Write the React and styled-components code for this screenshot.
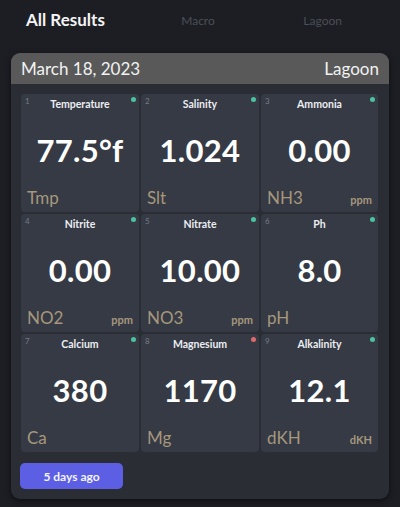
import React from 'react';
import styled, {createGlobalStyle} from 'styled-components';

const GlobalStyle = createGlobalStyle`
  html, body {
    margin: 0;
    padding: 0;
    background: #1c1e24;
  }
  body {
    font-family: Lato, "Open Sans", sans-serif;
    width: 400px;
    height: 507px;
    overflow: hidden;
  }
`;

const Page = styled.div`
  width: 400px;
  height: 507px;
  background: #1c1e24;
  box-sizing: border-box;
  padding: 0 11px;
`;

const Tabs = styled.div`
  display: flex;
  align-items: center;
  height: 38px;
  padding-left: 15px;
`;

const Tab = styled.div`
  color: ${({active}) => (active ? '#f4f4f6' : '#4b4e56')};
  font-size: ${({active}) => (active ? '17px' : '12px')};
  font-weight: ${({active}) => (active ? 700 : 400)};
  width: ${({w}) => w}px;
  text-align: ${({active}) => (active ? 'left' : 'center')};
  padding-top: ${({active}) => (active ? '1px' : '3px')};
`;

const Card = styled.div`
  margin-top: 15px;
  background: #2a2d34;
  border-radius: 9px;
  overflow: hidden;
  box-shadow: 0 2px 6px rgba(0, 0, 0, 0.5);
`;

const CardHeader = styled.div`
  display: flex;
  justify-content: space-between;
  align-items: center;
  height: 31px;
  padding: 0 10px;
  background: #595959;
  color: #f2f2f2;
  font-size: 17px;
`;

const Grid = styled.div`
  display: grid;
  grid-template-columns: 118px 118px 117px;
  grid-auto-rows: 118px;
  gap: 2px;
  padding: 10px 10px 0 10px;
`;

const Cell = styled.div`
  position: relative;
  background: #353a44;
  border-radius: 4px;
  display: flex;
  flex-direction: column;
  align-items: center;
`;

const Index = styled.span`
  position: absolute;
  left: 4px;
  top: 2px;
  font-size: 8px;
  color: #757a85;
`;

const Dot = styled.span`
  position: absolute;
  right: 3px;
  top: 3px;
  width: 5px;
  height: 5px;
  border-radius: 50%;
  background: ${({bad}) => (bad ? '#e0696d' : '#4cc3a0')};
`;

const Title = styled.div`
  margin-top: 4px;
  font-size: 10.5px;
  font-weight: 700;
  color: #eceef2;
  line-height: 12px;
`;

const Value = styled.div`
  margin-top: 22px;
  font-size: 31px;
  font-weight: 700;
  color: #ffffff;
  line-height: 36px;
  letter-spacing: 0.3px;
`;

const Footer = styled.div`
  margin-top: auto;
  align-self: stretch;
  display: flex;
  justify-content: space-between;
  align-items: baseline;
  padding: 0 6px 4px 6px;
  color: #a6977d;
`;

const Short = styled.span`
  font-size: 17px;
`;

const Unit = styled.span`
  font-size: 11px;
  font-weight: 700;
`;

const ButtonRow = styled.div`
  padding: 11px 9px 10px;
`;

const AgoButton = styled.button`
  width: 103px;
  height: 26px;
  border: none;
  border-radius: 5px;
  background: #5c5fe3;
  color: #f3f3ff;
  font-family: Lato, sans-serif;
  font-size: 12px;
  font-weight: 700;
`;

const results = [
  {title: 'Temperature', value: '77.5°f', short: 'Tmp'},
  {title: 'Salinity', value: '1.024', short: 'Slt'},
  {title: 'Ammonia', value: '0.00', short: 'NH3', unit: 'ppm'},
  {title: 'Nitrite', value: '0.00', short: 'NO2', unit: 'ppm'},
  {title: 'Nitrate', value: '10.00', short: 'NO3', unit: 'ppm'},
  {title: 'Ph', value: '8.0', short: 'pH'},
  {title: 'Calcium', value: '380', short: 'Ca'},
  {title: 'Magnesium', value: '1170', short: 'Mg', bad: true},
  {title: 'Alkalinity', value: '12.1', short: 'dKH', unit: 'dKH'},
];

const App = () => (
  <Page>
    <GlobalStyle />
    <Tabs>
      <Tab active w={120}>All Results</Tab>
      <Tab w={123}>Macro</Tab>
      <Tab w={140}>Lagoon</Tab>
    </Tabs>
    <Card>
      <CardHeader>
        <span>March 18, 2023</span>
        <span>Lagoon</span>
      </CardHeader>
      <Grid>
        {results.map((r, i) => (
          <Cell key={r.title}>
            <Index>{i + 1}</Index>
            <Dot bad={r.bad} />
            <Title>{r.title}</Title>
            <Value>{r.value}</Value>
            <Footer>
              <Short>{r.short}</Short>
              {r.unit && <Unit>{r.unit}</Unit>}
            </Footer>
          </Cell>
        ))}
      </Grid>
      <ButtonRow>
        <AgoButton>5 days ago</AgoButton>
      </ButtonRow>
    </Card>
  </Page>
);

export default App;
